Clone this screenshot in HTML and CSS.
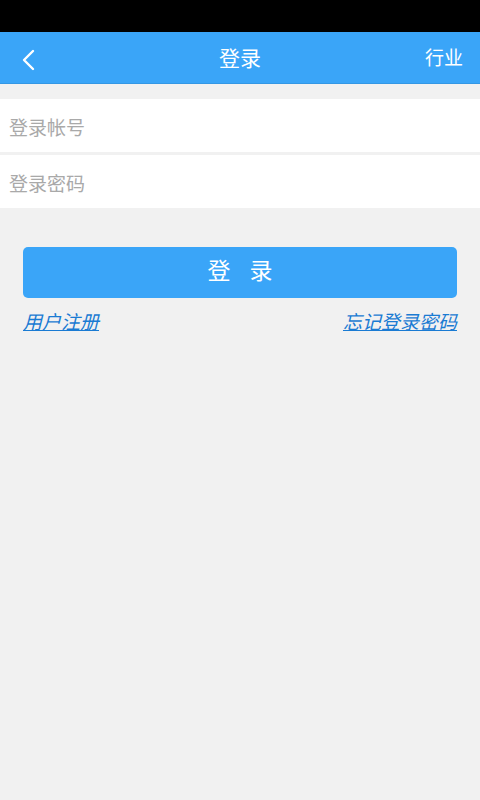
FILE: index.html
```html
<!DOCTYPE html>
<html lang="zh-CN">
<head>
<meta charset="utf-8">
<link rel="stylesheet" href="styles.css">
</head>
<body>
<div class="status"></div>
<header class="bar">
  <span class="back"><svg width="14" height="22" viewBox="0 0 14 22"><path d="M12 2 L3 11 L12 20" fill="none" stroke="#fff" stroke-width="2.4" stroke-linecap="round" stroke-linejoin="round"/></svg></span>
  <span class="title">登录</span>
  <span class="right">行业</span>
</header>
<main class="content">
  <div class="fields">
    <div class="field">登录帐号</div>
    <div class="field">登录密码</div>
  </div>
  <div class="actions">
    <button class="login">登&nbsp;录</button>
    <div class="links">
      <a class="link">用户注册</a>
      <a class="link">忘记登录密码</a>
    </div>
  </div>
</main>
</body>
</html>
```
FILE: styles.css
```css
html, body { margin: 0; padding: 0; }
body {
  width: 480px; height: 800px; background: #f1f1f1;
  font-family: "Noto Sans CJK SC", "Noto Sans", sans-serif;
  overflow: hidden;
}
.status { height: 32px; background: #000; }
.bar {
  height: 52px; background: #3aa5f8; border-bottom: 1px solid #3497e4;
  box-sizing: border-box; display: flex; align-items: center; position: relative;
  color: #fff;
}
.back { width: 56px; display: flex; padding-left: 21px; box-sizing: border-box; margin-top: 4px; }
.title { flex: 1; text-align: center; font-size: 21px; margin-top: -2px; }
.right { width: 56px; text-align: right; padding-right: 17px; box-sizing: border-box; font-size: 19px; white-space: nowrap; margin-top: -2px; }
.content { padding-top: 15px; }
.fields { display: flex; flex-direction: column; gap: 3px; }
.field {
  height: 53px; background: #fff; color: #a9a9a9; font-size: 19px;
  display: flex; align-items: center; padding-left: 9px; padding-top: 2px; box-sizing: border-box;
}
.actions { padding: 39px 23px 0 23px; }
.login {
  display: block; width: 100%; height: 51px; border: none; border-radius: 5px;
  background: #3aa5f8; color: #fff; font-family: inherit; font-size: 23px;
  letter-spacing: 7px; padding: 0 0 7px 7px; line-height: 1;
}
.links { display: flex; justify-content: space-between; margin-top: 10px; }
.link {
  color: #1a7bd3; font-size: 19px; font-style: italic; text-decoration: underline;
  line-height: 26px;
}
```
